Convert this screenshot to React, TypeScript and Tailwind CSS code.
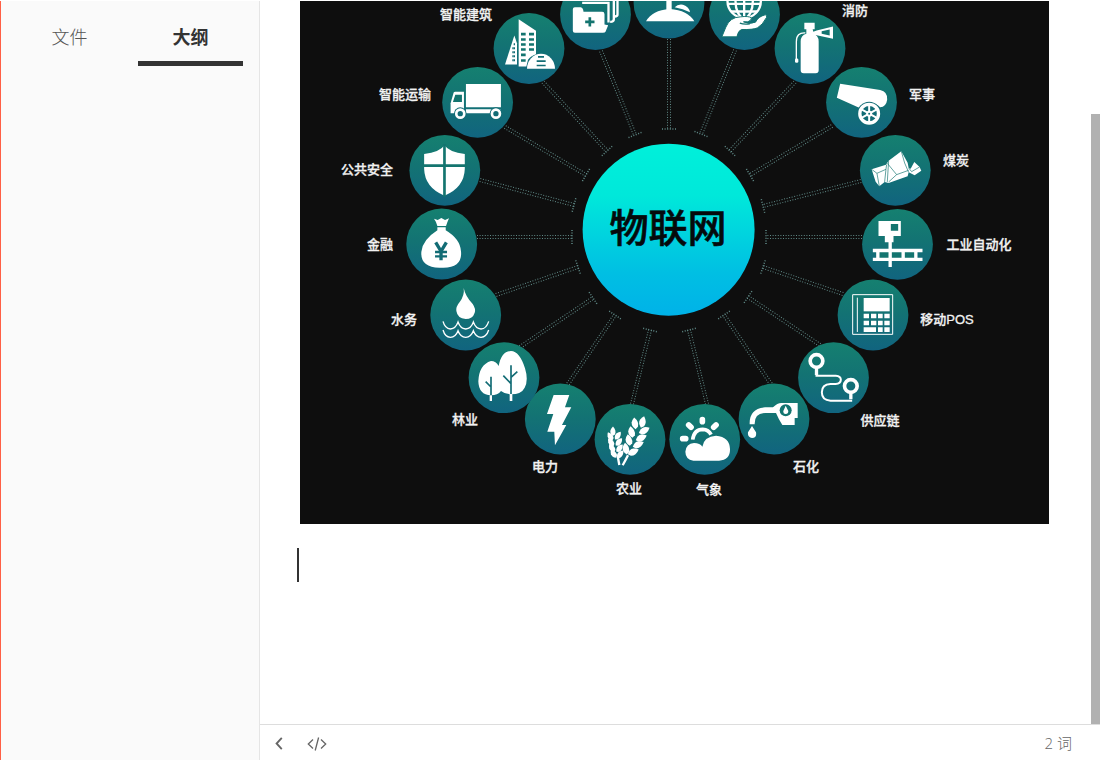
import type { ReactNode } from "react";

const TEAL = "#13746f";
const DEEP = "#126c75";

type Sector = {
  // centre of the badge
  x: number;
  y: number;
  // centre of the icon artwork, which is drawn at three times its final size
  ox: number;
  oy: number;
  // connector, from the badge to the hub
  from: [number, number];
  to: [number, number];
  label?: string;
  lx?: number;
  ly?: number;
  icon: ReactNode;
};

const buildings = (
  <>
    <path d="M356 58 L408 93 V163 Q392 168 384 180 L379 200 H356 Z" />
    <path d="M343 107 L351 130 V194 H315 Z" />
    <path d="M381 207 A42 45 0 0 1 465 207 Z" />
    <g stroke={TEAL} strokeWidth="8" fill="none">
      <path d="M363 103 H377 M387 103 H402 M363 119 H377 M387 119 H402 M363 134 H377 M387 134 H402 M363 149 H377 M387 149 H402 M363 165 H377 M363 182 H377" />
    </g>
    <g stroke={DEEP} fill="none">
      <path d="M343 130 V190" strokeWidth="4" strokeDasharray="6 6" />
      <path d="M339 142 V190" strokeWidth="4" strokeDasharray="6 6" />
      <path d="M414 171 H432 M410 184 H437 M410 197 H437" strokeWidth="5" />
    </g>
  </>
);

const folder = (
  <>
    <path d="M518 28 Q518 22 524 22 H542 Q547 22 549 30 L550 36 H606 Q613 36 613 43 V74 L624 76 L616 96 Q615 99 608 99 H524 Q518 99 518 93 Z" />
    <path d="M546 9 H625 V68 M556 -6 H641 V58 Q641 66 630 66 M590 -16 H652 V44 Q652 50 644 50" fill="none" stroke="#fff" strokeWidth="7" />
    <path d="M569 52 V80 M555 66 H583" stroke={TEAL} strokeWidth="8" />
  </>
);

const dome = (
  <>
    <path d="M17 64 Q35 31 88 27 Q143 31 162 64 Z" />
    <path d="M78 -30 H94 V30 H78 Z" />
    <path d="M103 22 Q113 11 128 14 Q147 20 149 37 Q128 26 103 22 Z" />
  </>
);

const globe = (
  <>
    <g fill="none" stroke="#fff" strokeWidth="7">
      <circle cx="313" cy="4" r="50" />
      <ellipse cx="313" cy="4" rx="26" ry="50" />
      <path d="M313 -46 V54 M264 12 H362 M273 35 H353" />
    </g>
    <path
      d="M246 111 L258 82 Q270 52 302 51 Q326 48 335 54 Q336 61 324 66 H311 Q327 75 347 67 Q355 50 376 45 Q383 45 380 53 Q368 76 353 84 Q340 90 305 89 Q295 92 291 111 Z"
      stroke={TEAL}
      strokeWidth="3"
    />
    <path d="M300 70 Q313 75 330 72" fill="none" stroke={TEAL} strokeWidth="4" />
  </>
);

const extinguisher = (
  <>
    <path d="M493 69 H524 V88 H518 L520 96 L530 92 L579 80 V117 L530 106 L519 102 Q536 107 536 125 V211 Q536 220 527 220 H491 Q482 220 482 211 V125 Q482 107 499 102 V88 H493 Z" />
    <path d="M545 94 L569 89 V107 L545 102 Z" fill={TEAL} />
    <path d="M496 99 Q469 97 469 126 V181" fill="none" stroke="#fff" strokeWidth="4" />
    <rect x="465" y="176" width="10" height="13" rx="4" />
  </>
);

const truck = (
  <>
    <path d="M198 252 H303 V322 H198 Z" />
    <path d="M152 340 V310 L161 278 Q162 275 166 275 H192 V340 Z" />
    <path d="M198 328 H303 V340 H198 Z" />
    <path d="M166 284 H186 V306 H159 Z" fill={TEAL} />
    <circle cx="181" cy="341" r="19" fill={DEEP} />
    <circle cx="288" cy="341" r="19" fill={DEEP} />
    <g stroke="#fff" strokeWidth="8" fill="none">
      <circle cx="181" cy="341" r="12" />
      <circle cx="288" cy="341" r="12" />
    </g>
  </>
);

const cannon = (
  <>
    <path d="M600 251 L720 270 Q743 275 741 299 Q738 320 720 322 Q703 306 680 311 Q664 314 657 323 L590 293 Z" />
    <circle cx="687" cy="341" r="36" fill={DEEP} />
    <g fill="none" stroke="#fff">
      <circle cx="687" cy="341" r="28" strokeWidth="10" />
      <path d="M687 315 V367 M664 328 L710 354 M710 328 L664 354" strokeWidth="6" />
    </g>
    <circle cx="687" cy="341" r="9" />
    <circle cx="687" cy="341" r="3" fill={DEEP} />
  </>
);

const shield = (
  <>
    <path d="M343 46 Q357 67 404 72 V117 Q402 173 343 197 Q284 173 282 117 V72 Q329 67 343 46 Z" />
    <path d="M343 42 V200 M276 107 H410" stroke={TEAL} strokeWidth="8" />
  </>
);

const coal = (
  <>
    <path d="M275 148 L318 134 L326 122 L364 94 L383 128 L386 144 L392 146 L403 126 L419 141 L424 152 L404 166 L386 157 L383 169 L326 189 L314 186 L298 199 L287 185 Z" />
    <path
      d="M275 148 L291 160 L318 148 L320 134 M291 160 L298 199 M318 148 L314 186 M322 130 L350 164 L386 151 M326 122 L322 186 M350 164 L326 186 M364 94 L374 129 L386 157 M386 144 L395 155 L419 141"
      fill="none"
      stroke={TEAL}
      strokeWidth="2"
    />
  </>
);

const automation = (
  <>
    <path d="M296 303 H363 V348 H341 V367 H336 V386 H428 V397 H413 V413 H428 V423 H336 V441 H326 V423 H279 V413 H289 V397 H279 V386 H326 V367 H315 V348 H296 Z" />
    <g fill={TEAL}>
      <path d="M333 312 H355 V332 H333 Z M299 397 H326 V413 H299 Z M336 397 H365 V413 H336 Z M375 397 H403 V413 H375 Z" />
    </g>
  </>
);

const moneyBag = (
  <>
    <path d="M312 266 L323 270 L334 264 L345 270 L357 265 Q351 278 348 288 H322 Q320 277 312 266 Z" />
    <path d="M322 292 H347 V301 Q391 327 393 365 Q397 413 340 413 H328 Q270 412 274 365 Q278 329 322 301 Z" />
    <path d="M317 337 L333 364 L349 337 M333 362 V391" fill="none" stroke={DEEP} strokeWidth="10" />
    <path d="M315 366 H351 M315 379 H351" fill="none" stroke={DEEP} strokeWidth="7" />
  </>
);

const water = (
  <>
    <path d="M401 474 Q406 499 428 522 Q438 537 434 548 Q428 567 407 567 Q382 565 379 543 Q377 530 389 516 Q404 496 401 474 Z" />
    <g fill="none" stroke="#fff" strokeWidth="4">
      <path d="M339 574 Q345 596 361 597 Q377 596 384 576 Q391 596 407 597 Q423 596 430 576 Q437 596 453 597 Q469 596 476 574" />
      <path d="M339 600 Q345 621 361 622 Q377 621 384 602 Q391 621 407 622 Q423 621 430 602 Q437 621 453 622 Q469 621 476 600" />
    </g>
  </>
);

const pos = (
  <>
    <path d="M218 524 H338 V643 H218 Z M232 533 V636" fill="none" stroke="#fff" strokeWidth="3" />
    <path d="M251 534 H329 V574 H251 Z" />
    <path d="M251 581 H267 V595 H251 Z M273 581 H289 V595 H273 Z M294 581 H308 V595 H294 Z M313 581 H329 V595 H313 Z M251 602 H267 V616 H251 Z M273 602 H289 V616 H273 Z M294 602 H308 V616 H294 Z M313 602 H329 V616 H313 Z M251 622 H288 V636 H251 Z M294 622 H308 V636 H294 Z M313 622 H329 V636 H313 Z" />
  </>
);

const trees = (
  <>
    <path d="M153 93 Q168 93 176 108 Q184 64 213 63 Q239 64 255 115 Q266 151 254 173 Q244 193 213 193 Q195 193 183 183 Q173 196 153 196 Q116 195 115 154 Q117 104 153 93 Z" />
    <g fill="none" stroke={DEEP} strokeWidth="5">
      <path d="M213 106 V194 M190 137 L213 161 M213 142 L232 125 M153 140 V197 M137 155 L153 171" />
    </g>
    <path d="M209 192 H217 V213 H209 Z M149 196 H156 V213 H149 Z" />
  </>
);

const bolt = <path d="M341 195 H388 L375 232 H394 L366 285 H379 L345 346 L343 305 H322 L340 252 H321 Z" />;

const leaf = "M0 -17 Q13 -3 7 11 L-1 17 Q-12 7 -9 -4 Q-6 -12 0 -17 Z";
const stalk: [number, number, number, number][] = [
  [608, 276, 14, 1.05],
  [585, 280, -8, 1.05],
  [613, 302, 62, 1.05],
  [575, 306, -12, 1.05],
  [604, 324, 65, 1.05],
  [567, 330, -12, 1.05],
  [595, 344, 65, 1.05],
  [558, 356, -10, 1.05],
  [580, 366, 65, 1.05],
  [519, 304, 0, 0.85],
  [511, 319, -30, 0.85],
  [534, 317, 35, 0.85],
  [513, 337, -35, 0.85],
  [537, 336, 40, 0.85],
  [516, 354, -35, 0.85],
  [539, 355, 40, 0.85],
  [521, 371, -35, 0.85],
  [541, 373, 40, 0.85],
];
const wheat = (
  <>
    {stalk.map(([x, y, angle, size]) => (
      <path key={`${x}-${y}`} d={leaf} transform={`translate(${x} ${y}) rotate(${angle}) scale(${size})`} />
    ))}
    <path d="M533 378 L538 405 M564 376 Q557 390 548 406" fill="none" stroke="#fff" strokeWidth="7" />
  </>
);

const weather = (
  <>
    <path d="M130 392 Q106 388 106 365 Q108 341 132 339 Q150 339 157 350 Q162 319 198 317 Q239 320 240 358 Q240 391 207 392 Z" />
    <path d="M128 329 Q132 298 158 298 Q176 299 183 314" fill="none" stroke="#fff" strokeWidth="11" />
    <path d="M157 269 V275 M116 285 L123 292 M198 285 L191 292 M98 326 H107" fill="none" stroke="#fff" strokeWidth="17" strokeLinecap="round" />
  </>
);

const fuel = (
  <>
    <path d="M299 283 Q297 236 345 232 H369 Q383 218 396 219 H443 V264 H434 V285 H397 Q385 266 378 249 H346 Q313 249 314 283 Z" />
    <circle cx="407" cy="241" r="18" fill={TEAL} />
    <path d="M407 227 L415 243 Q415 252 407 252 Q399 252 400 243 Z M306 288 L318 307 Q321 323 306 324 Q292 322 294 307 Z" />
  </>
);

const route = (
  <g fill="none" stroke="#fff">
    <circle cx="500" cy="93" r="19" strokeWidth="11" />
    <circle cx="603" cy="168" r="19" strokeWidth="11" />
    <path d="M500 113 V135 M603 188 V208" strokeWidth="10" />
    <path d="M497 137 H558 Q573 138 573 149 Q573 161 557 162 H542 Q516 163 516 187 Q516 211 542 212 H607" strokeWidth="6" />
  </g>
);

const sectors: Sector[] = [
  { x: 669, y: 3, ox: 86, oy: 9, from: [669, 39], to: [669, 129], icon: dome },
  { x: 744.5, y: 14.5, ox: 314, oy: 44, from: [735, 50], to: [701, 134], icon: globe },
  { x: 810, y: 48.5, ox: 510, oy: 146, from: [795, 82], to: [730, 151], label: "消防", lx: 855, ly: 15, icon: extinguisher },
  { x: 861.5, y: 102.3, ox: 664, oy: 307, from: [832, 126], to: [750, 175], label: "军事", lx: 922, ly: 99, icon: cannon },
  { x: 895.3, y: 170.3, ox: 346, oy: 151, from: [861, 181], to: [763, 206], label: "煤炭", lx: 956, ly: 165, icon: coal },
  { x: 897.5, y: 244.3, ox: 353, oy: 373, from: [862, 237], to: [766, 237], label: "工业自动化", lx: 979, ly: 249, icon: automation },
  { x: 873, y: 315, ox: 279, oy: 585, from: [843, 294], to: [763, 267], label: "移动POS", lx: 947, ly: 324, icon: pos },
  { x: 833.5, y: 377.7, ox: 551, oy: 143, from: [820, 345], to: [748, 297], label: "供应链", lx: 880, ly: 425, icon: route },
  { x: 774, y: 419, ox: 372, oy: 267, from: [771, 384], to: [724, 315], label: "石化", lx: 806, ly: 471, icon: fuel },
  { x: 704.7, y: 439.3, ox: 164, oy: 328, from: [707, 404], to: [689, 330], label: "气象", lx: 709, ly: 494, icon: weather },
  { x: 630, y: 439.3, ox: 570, oy: 328, from: [632, 404], to: [650, 330], label: "农业", lx: 629, ly: 493, icon: wheat },
  { x: 560.3, y: 419, ox: 361, oy: 267, from: [568, 384], to: [615, 315], label: "电力", lx: 545, ly: 471, icon: bolt },
  { x: 504, y: 377.7, ox: 192, oy: 143, from: [520, 347], to: [593, 298], label: "林业", lx: 465, ly: 424, icon: trees },
  { x: 465.7, y: 315, ox: 407, oy: 555, from: [496, 295], to: [578, 267], label: "水务", lx: 404, ly: 324, icon: water },
  { x: 441.7, y: 244, ox: 335, oy: 342, from: [477, 237], to: [572, 237], label: "金融", lx: 380, ly: 249, icon: moneyBag },
  { x: 444.8, y: 170.3, ox: 344, oy: 121, from: [480, 180], to: [574, 205], label: "公共安全", lx: 367, ly: 174, icon: shield },
  { x: 477.6, y: 102.3, ox: 233, oy: 307, from: [505, 127], to: [586, 175], label: "智能运输", lx: 405, ly: 99, icon: truck },
  { x: 529, y: 48.5, ox: 387, oy: 146, from: [543, 82], to: [607, 151], label: "智能建筑", lx: 466, ly: 19, icon: buildings },
  { x: 595.5, y: 14.5, ox: 586, oy: 44, from: [601, 51], to: [635, 135], icon: folder },
];

function Connector({ from, to }: { from: [number, number]; to: [number, number] }) {
  const dx = to[0] - from[0];
  const dy = to[1] - from[1];
  const length = Math.hypot(dx, dy);
  const angle = (Math.atan2(dy, dx) * 180) / Math.PI;
  return (
    <g transform={`translate(${from[0]} ${from[1]}) rotate(${angle})`} stroke="#76aaa6" strokeOpacity="0.8" strokeWidth="1" strokeDasharray="1 1.6">
      <path d={`M0 -1.5 H${length} M0 1.5 H${length}`} />
      <path d={`M${length} -7 V7`} strokeWidth="1.5" />
    </g>
  );
}

function IotDiagram() {
  return (
    <svg
      viewBox="300 1 749 523"
      role="img"
      aria-label="物联网"
      className="block w-full font-['Liberation_Sans','Noto_Sans_CJK_SC',sans-serif]"
    >
      <defs>
        <linearGradient id="badge" x1="0" y1="0" x2="0" y2="1">
          <stop offset="0" stopColor="#158070" />
          <stop offset="0.45" stopColor="#137373" />
          <stop offset="1" stopColor="#11647f" />
        </linearGradient>
        <linearGradient id="hub" x1="0" y1="0" x2="0" y2="1">
          <stop offset="0" stopColor="#00f0da" />
          <stop offset="0.3" stopColor="#00e8da" />
          <stop offset="0.75" stopColor="#00bfe3" />
          <stop offset="1" stopColor="#00b2e8" />
        </linearGradient>
      </defs>
      <rect x="300" y="1" width="749" height="523" fill="#0e0e0e" />
      {sectors.map((s) => (
        <Connector key={`${s.x}`} from={s.from} to={s.to} />
      ))}
      {sectors.map((s) => (
        <g key={`${s.x}`}>
          <circle cx={s.x} cy={s.y} r="35.4" fill="url(#badge)" />
          <g fill="#fff" transform={`translate(${s.x} ${s.y}) scale(0.3333) translate(${-s.ox} ${-s.oy})`}>
            {s.icon}
          </g>
          {s.label && (
            <text x={s.lx} y={s.ly} textAnchor="middle" fill="#f2f2f2" stroke="#f2f2f2" strokeWidth="0.3" className="text-[13px] font-medium">
              {s.label}
            </text>
          )}
        </g>
      ))}
      <circle cx="668.6" cy="229.7" r="86" fill="url(#hub)" />
      <text x="668" y="242" textAnchor="middle" fill="#050a0c" stroke="#050a0c" strokeWidth="0.6" className="text-[39px] font-medium">
        物联网
      </text>
    </svg>
  );
}

export default function App() {
  return (
    <div className="flex h-screen bg-white pt-px font-['Noto_Sans_CJK_SC',sans-serif]">
      <aside className="w-[260px] shrink-0 border-r border-l border-r-[#e5e5e5] border-l-[#ff5f45] bg-[#fafafa] px-4">
        <div role="tablist" className="grid grid-cols-2 gap-4 text-lg">
          <button role="tab" aria-selected="false" className="h-[65px] border-b-[5px] border-transparent pt-2.5 font-light text-[#555]">
            文件
          </button>
          <button role="tab" aria-selected="true" className="h-[65px] border-b-[5px] border-[#333] pt-2.5 font-bold text-[#333]">
            大纲
          </button>
        </div>
      </aside>

      <div className="flex min-w-0 flex-1 flex-col">
        <div className="flex min-h-0 flex-1">
          <main className="min-w-0 flex-1 overflow-hidden pr-[42px] pl-[37px]">
            <figure className="pl-[3px]">
              <IotDiagram />
            </figure>
            <div className="mt-6 h-[34px] border-l-2 border-[#333]" />
          </main>
          <div className="flex w-[9px] shrink-0 flex-col pt-[113px]">
            <div className="flex-1 bg-[#b1b1b1]" />
          </div>
        </div>

        <footer className="flex h-9 shrink-0 items-center border-t border-[#ddd] pt-0.5 pr-7 pl-[7px] text-[#666]">
          <button aria-label="返回" className="flex size-6 items-center justify-center">
            <svg viewBox="0 0 8 14" className="h-[13px] w-2" fill="none" stroke="currentColor" strokeWidth="2">
              <path d="M7 1 L1.4 7 L7 13" />
            </svg>
          </button>
          <button aria-label="源代码模式" className="ml-[13px] flex h-6 w-[26px] items-center justify-center">
            <svg viewBox="0 0 20 14" className="h-[14px] w-5" fill="none" stroke="currentColor" strokeWidth="1.3">
              <path d="M6 2.5 L1.3 7 L6 11.5 M14 2.5 L18.7 7 L14 11.5 M11.6 0.5 L8.2 13.5" />
            </svg>
          </button>
          <span className="ml-auto font-['Open_Sans','Noto_Sans_CJK_SC',sans-serif] text-[15px] font-light">2 词</span>
        </footer>
      </div>
    </div>
  );
}
